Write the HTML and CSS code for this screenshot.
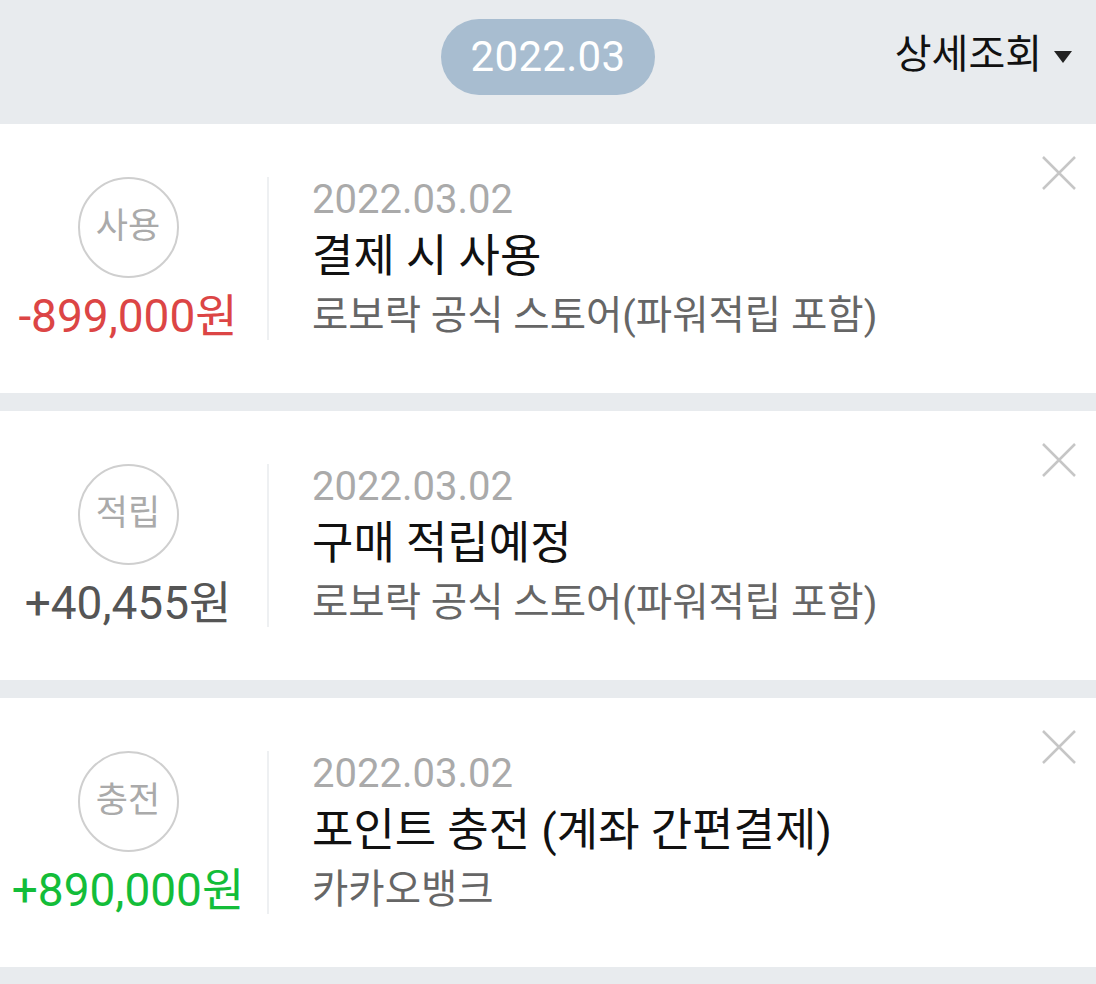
FILE: index.html
```html
<!DOCTYPE html>
<html lang="ko">
<head>
    <meta charset="UTF-8">
    <meta name="viewport" content="width=device-width, initial-scale=1.0">
    <title>포인트 내역</title>
    <link rel="stylesheet" href="styles.css">
</head>
<body>
    <div class="month-bar">
        <div class="month-pill">2022.03</div>
        <div class="detail-toggle">상세조회 <span class="caret"></span></div>
    </div>

    <div class="history-list">
        <div class="history-item">
            <div class="item-left">
                <div class="item-badge">사용</div>
                <div class="item-amount amount-minus">-899,000원</div>
            </div>
            <div class="item-divider"></div>
            <div class="item-body">
                <div class="item-date">2022.03.02</div>
                <div class="item-title">결제 시 사용</div>
                <div class="item-desc">로보락 공식 스토어(파워적립 포함)</div>
            </div>
            <button class="item-close" aria-label="삭제">
                <svg viewBox="0 0 34 34" width="34" height="34"><path d="M1 1L33 33M33 1L1 33" /></svg>
            </button>
        </div>

        <div class="history-item">
            <div class="item-left">
                <div class="item-badge">적립</div>
                <div class="item-amount amount-plan">+40,455원</div>
            </div>
            <div class="item-divider"></div>
            <div class="item-body">
                <div class="item-date">2022.03.02</div>
                <div class="item-title">구매 적립예정</div>
                <div class="item-desc">로보락 공식 스토어(파워적립 포함)</div>
            </div>
            <button class="item-close" aria-label="삭제">
                <svg viewBox="0 0 34 34" width="34" height="34"><path d="M1 1L33 33M33 1L1 33" /></svg>
            </button>
        </div>

        <div class="history-item">
            <div class="item-left">
                <div class="item-badge">충전</div>
                <div class="item-amount amount-plus">+890,000원</div>
            </div>
            <div class="item-divider"></div>
            <div class="item-body">
                <div class="item-date">2022.03.02</div>
                <div class="item-title">포인트 충전 (계좌 간편결제)</div>
                <div class="item-desc">카카오뱅크</div>
            </div>
            <button class="item-close" aria-label="삭제">
                <svg viewBox="0 0 34 34" width="34" height="34"><path d="M1 1L33 33M33 1L1 33" /></svg>
            </button>
        </div>
    </div>
</body>
</html>
```

FILE: styles.css
```css
body {
    margin: 0;
    font-family: Roboto, "Noto Sans CJK KR", sans-serif;
    background: #e8ebee;
    color: #222;
}
.month-bar {
    height: 124px;
    display: flex;
    justify-content: center;
    align-items: flex-start;
    padding-top: 19px;
    box-sizing: border-box;
}
.month-pill {
    width: 214px;
    height: 76px;
    border-radius: 38px;
    background: #a8bdd0;
    color: white;
    font-size: 42px;
    line-height: 76px;
    text-align: center;
    letter-spacing: 0.3px;
}
.detail-toggle {
    position: absolute;
    right: 24px;
    top: 28px;
    font-size: 40px;
    line-height: 54px;
    color: #111;
    display: flex;
    align-items: center;
}
.caret {
    display: inline-block;
    margin-left: 12px;
    border-left: 9px solid transparent;
    border-right: 9px solid transparent;
    border-top: 12px solid #222;
    margin-top: 4px;
}
.history-list {
    display: flex;
    flex-direction: column;
    gap: 18px;
}
.history-item {
    background: white;
    height: 269px;
    box-sizing: border-box;
    padding: 53px 20px 0 0;
    display: flex;
    align-items: flex-start;
}
.item-left {
    width: 256px;
    display: flex;
    flex-direction: column;
    align-items: center;
}
.item-badge {
    width: 97px;
    height: 97px;
    border: 2px solid #cfcfcf;
    border-radius: 50%;
    color: #aaa;
    font-size: 35px;
    line-height: 95px;
    text-align: center;
}
.item-amount {
    font-size: 46px;
    line-height: 54px;
    margin-top: 11px;
    white-space: nowrap;
}
.amount-minus {
    color: #dc4545;
}
.amount-plan {
    color: #555;
}
.amount-plus {
    color: #13bd39;
}
.item-divider {
    width: 2px;
    height: 163px;
    background: #eef0f2;
    margin-left: 11px;
}
.item-body {
    flex: 1;
    padding-left: 43px;
}
.item-date {
    font-size: 40px;
    line-height: 46px;
    color: #aaa;
}
.item-title {
    font-size: 45px;
    line-height: 62px;
    margin-top: 3px;
    color: #111;
}
.item-desc {
    font-size: 39.5px;
    line-height: 56px;
    color: #666;
}
.item-close {
    border: none;
    background: none;
    padding: 0;
    margin-top: -21px;
    width: 34px;
    height: 34px;
    cursor: pointer;
}
.item-close path {
    stroke: #c6c6c6;
    stroke-width: 2.5;
    fill: none;
}
```
